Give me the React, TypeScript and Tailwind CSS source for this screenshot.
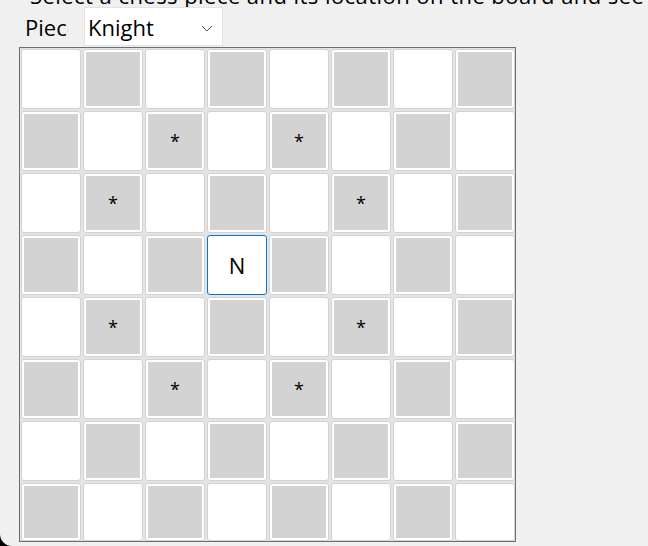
import { useState } from "react";

const KNIGHT_MOVES = [
  [-2, -1],
  [-2, 1],
  [-1, -2],
  [-1, 2],
  [1, -2],
  [1, 2],
  [2, -1],
  [2, 1],
];

const PIECES = ["Knight", "Bishop", "Rook", "Queen", "King"];

const App = () => {
  const [piece, setPiece] = useState("Knight");
  const [pos, setPos] = useState<[number, number]>([3, 3]);

  // only knight moves are shown in this sketch
  const marked = new Set(
    KNIGHT_MOVES.map(([dr, dc]) => `${pos[0] + dr}-${pos[1] + dc}`)
  );

  const cells = [];
  for (let r = 0; r < 8; r++) {
    for (let c = 0; c < 8; c++) {
      const dark = (r + c) % 2 === 1;
      const selected = r === pos[0] && c === pos[1];
      cells.push(
        <button
          key={`${r}-${c}`}
          onClick={() => setPos([r, c])}
          className={`rounded-[3px] border bg-white p-[2px] ${
            selected ? "border-[#0078d7]" : "border-[#d2d2d2]"
          }`}
        >
          <div
            className={`w-full h-full flex items-center justify-center ${
              dark && !selected ? "bg-[#d3d3d3]" : "bg-white"
            }`}
          >
            {selected ? (
              <span className="text-[22px] leading-none">N</span>
            ) : marked.has(`${r}-${c}`) ? (
              <span className="text-[18px] leading-none">*</span>
            ) : null}
          </div>
        </button>
      );
    }
  }

  return (
    <div
      className="relative w-[648px] h-[546px] overflow-hidden bg-[#f0f0f0] text-black"
      style={{ fontFamily: '"Open Sans", "Noto Sans", sans-serif' }}
    >
      <div className="-mt-[20px] h-[27px] pl-[30px] text-[22px] leading-[30px] tracking-[0.45px] whitespace-nowrap">
        Select a chess piece and its location on the board and see
      </div>

      <div className="flex h-[40px] pl-[19px]">
        <label className="w-[49px] mr-[16px] pl-[6px] overflow-hidden whitespace-nowrap text-[22px] leading-[41px]">
          Piece:
        </label>
        <div className="relative w-[139px] h-[39px]">
          <select
            value={piece}
            onChange={(e) => setPiece(e.target.value)}
            className="appearance-none w-full h-full bg-white border border-[#e3e3e3] pl-[3px] pt-[2px] text-[22px] outline-none"
          >
            {PIECES.map((p) => (
              <option key={p} value={p}>
                {p}
              </option>
            ))}
          </select>
          <svg
            className="absolute right-[10px] top-[18px] pointer-events-none"
            width="12"
            height="7"
            viewBox="0 0 12 7"
          >
            <path d="M1 1 L6 6 L11 1" fill="none" stroke="#555" strokeWidth="1" />
          </svg>
        </div>
      </div>

      <div className="ml-[19px] w-[497px] border border-[#6e6e6e] bg-[#e4e4e4] pl-[1px] pt-[1px]">
        <div className="grid grid-cols-[repeat(8,60px)] grid-rows-[repeat(7,60px)_58px] gap-[2px]">
          {cells}
        </div>
      </div>

      <div className="absolute left-0 bottom-0 w-[12px] h-[12px] bg-black">
        <div className="w-full h-full bg-[#f0f0f0] rounded-bl-[12px]" />
      </div>
    </div>
  );
};

export default App;
